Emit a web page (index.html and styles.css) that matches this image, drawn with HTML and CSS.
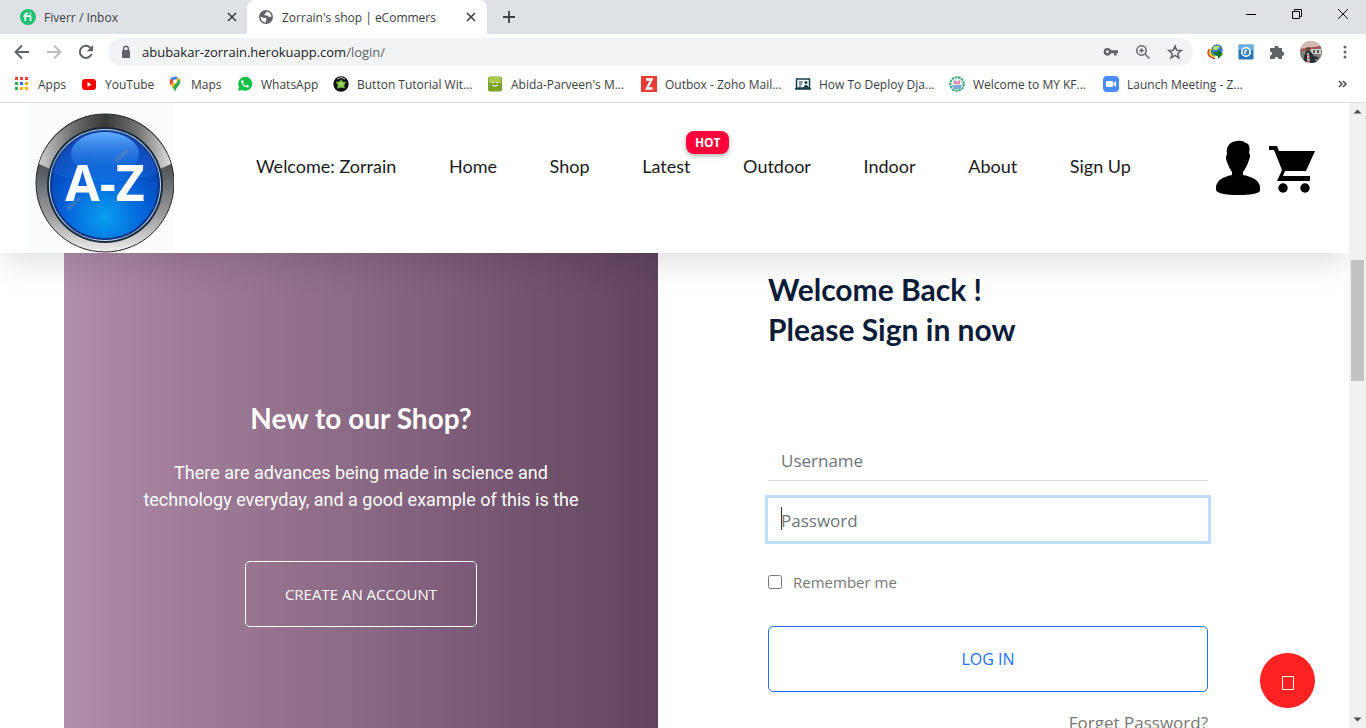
FILE: index.html
```html
<!DOCTYPE html>
<html lang="en">
<head>
<meta charset="utf-8">
<title>Zorrain's shop | eCommers</title>
<link rel="stylesheet" href="styles.css">
</head>
<body>
<div class="window">
  <div class="tabstrip">
    <div class="tab">
      <svg class="icon" viewBox="0 0 16 16"><circle cx="8" cy="8" r="8" fill="#1dbf73"/><path d="M3.500 7.200H11M5.300 12V6.200Q5.300 4.200 8 4.500M10.500 7v5" fill="none" stroke="#fff" stroke-width="1.700"/><circle cx="10.500" cy="4.600" r="1" fill="#fff"/></svg>
      <span class="tab-title">Fiverr / Inbox</span>
      <button class="bare" aria-label="Close tab"><svg class="icon-sm" viewBox="0 0 10 10"><path d="M1 1l8 8M9 1l-8 8" stroke="#3c4043" stroke-width="1.600"/></svg></button>
    </div>
    <div class="tab tab-active">
      <svg class="icon" viewBox="0 0 16 16"><circle cx="8" cy="8" r="7" fill="#5f6368"/><path d="M2.400 7.500Q4.500 9.300 8 8.800Q9 10 8 11.200L8 13.600Q3 13.300 2.400 7.500ZM8.500 2.500Q12.500 3 13.600 7.500L11 8Q9.500 5.800 7.300 6.500L6 5.200Q8.500 4.800 8.500 2.500Z" fill="#fff"/></svg>
      <span class="tab-title">Zorrain's shop | eCommers</span>
      <button class="bare" aria-label="Close tab"><svg class="icon-sm" viewBox="0 0 10 10"><path d="M1 1l8 8M9 1l-8 8" stroke="#3c4043" stroke-width="1.600"/></svg></button>
    </div>
    <button class="bare new-tab" aria-label="New tab"><svg class="icon" viewBox="0 0 16 16"><path d="M8 2v12M2 8h12" stroke="#3c4043" stroke-width="1.800"/></svg></button>
    <div class="window-controls">
      <button class="bare" aria-label="Minimize"><svg class="icon" viewBox="0 0 16 16"><path d="M3 8.500h10" stroke="#000"/></svg></button>
      <button class="bare" aria-label="Restore"><svg class="icon" viewBox="0 0 16 16"><path d="M3.500 5.500h7v7h-7zM5.500 5.500v-2h7v7h-2" fill="none" stroke="#000"/></svg></button>
      <button class="bare" aria-label="Close"><svg class="icon" viewBox="0 0 16 16"><path d="M3 3l10 10M13 3L3 13" stroke="#000"/></svg></button>
    </div>
  </div>

  <div class="toolbar">
    <button class="bare" aria-label="Back"><svg class="icon" viewBox="0 0 16 16"><path d="M15 8H2M8 1.500L1.500 8L8 14.500" fill="none" stroke="#5f6368" stroke-width="1.900"/></svg></button>
    <button class="bare" aria-label="Forward"><svg class="icon" viewBox="0 0 16 16"><path d="M1 8h13M8 1.500L14.500 8L8 14.500" fill="none" stroke="#babcbe" stroke-width="1.900"/></svg></button>
    <button class="bare" aria-label="Reload"><svg class="icon" viewBox="0 0 16 16"><path d="M13.500 10A6 6 0 1 1 12.300 3.800" fill="none" stroke="#5f6368" stroke-width="2"/><path d="M15 1v6.200H8.800z" fill="#5f6368"/></svg></button>
    <div class="address">
      <svg class="icon" viewBox="0 0 16 16"><rect x="4" y="6" width="8" height="8" rx="1" fill="#5f6368"/><path d="M5.700 7V4.500a2.300 2.300 0 0 1 4.600 0V7" fill="none" stroke="#5f6368" stroke-width="1.400"/></svg>
      <span class="url">abubakar-zorrain.herokuapp.com<span class="url-path">/login/</span></span>
      <svg class="icon" viewBox="0 0 16 16"><path fill-rule="evenodd" d="M4.500 4A3.800 3.800 0 1 0 8 9.200h3V11.500h2.500V9.200H15V6.200H8A3.800 3.800 0 0 0 4.500 4ZM4.500 6.300a1.400 1.400 0 1 1 0 2.900a1.400 1.400 0 0 1 0-2.900Z" fill="#5f6368"/></svg>
      <svg class="icon" viewBox="0 0 16 16"><circle cx="6.500" cy="6.500" r="4.700" fill="none" stroke="#5f6368" stroke-width="1.500"/><path d="M10 10l4.500 4.500M4.300 6.500h4.400M6.500 4.300v4.400" stroke="#5f6368" stroke-width="1.400"/></svg>
      <svg class="icon" viewBox="0 0 16 16"><path d="M8 2l1.700 4.200 4.500.3-3.400 2.900 1.100 4.400L8 11.400l-3.900 2.400 1.100-4.400L1.800 6.500l4.500-.3z" fill="none" stroke="#5f6368" stroke-width="1.500"/></svg>
    </div>
    <div class="extensions">
      <svg class="icon" viewBox="0 0 16 16"><path d="M2.500 5Q-2 12 8 14.500" fill="none" stroke="#d42f24" stroke-width="1.500"/><path d="M4 5Q0 11 8 12.800" fill="none" stroke="#edc62f" stroke-width="2"/><path d="M5 6Q3 10 8 11.500" fill="none" stroke="#4a9e35" stroke-width="1.500"/><circle cx="10" cy="6" r="5.700" fill="#3c79bd"/><path d="M6 3q4-3 7 0l-3 3-4 0z" fill="#b6d86b"/><path d="M7 8h4V6l5 4-5 5v-3Q8 12 7 8z" fill="#16751d"/></svg>
      <svg class="icon" viewBox="0 0 16 16"><rect x=".5" y=".5" width="15" height="15" rx="1" fill="#2a75b8"/><path d="M1 1h14v5H1z" fill="#62aee5"/><circle cx="8" cy="8" r="4.300" fill="#3e85bf" stroke="#fff" stroke-width="1.600"/><path d="M7 10Q6 7 9 6" fill="none" stroke="#fff" stroke-width="1.400"/></svg>
      <svg class="icon" viewBox="0 0 16 16"><path d="M1 4h4.300a2.200 2.200 0 1 1 4.400 0H13v3.500a2.200 2.200 0 1 1 0 4.400V15H9.500a2 2 0 0 0-4 0H1v-3.500a2 2 0 0 0 0-4z" fill="#5f6368"/></svg>
      <svg class="avatar" viewBox="0 0 22 22"><clipPath id="face"><circle cx="11" cy="11" r="11"/></clipPath><g clip-path="url(#face)"><path d="M0 0h22v22H0z" fill="#887f79"/><path d="M0 0h22v5L0 8z" fill="#d4bab5"/><path d="M1 8l20-3v2L1 10z" fill="#a54d49"/><path d="M11 8h10v5H11z" fill="#cdd0c7"/><path d="M13 9h2v3h-2zM17 9h2v3h-2z" fill="#54605e"/><path d="M3 22l1-7 3-6 4 2 3 4 4 1 1 6z" fill="#292f36"/><circle cx="8" cy="8" r="2" fill="#6b4038"/><path d="M7 12h2l1 10H7z" fill="#d7c9c8"/><path d="M7 14h3M7 17h3M7 20h3" stroke="#a83b44"/><path d="M1 12h3v5H1zM15 18h5v2h-5z" fill="#718574"/></g></svg>
      <button class="bare" aria-label="Menu"><svg class="icon" viewBox="0 0 16 16"><g fill="#5f6368"><circle cx="8" cy="3" r="1.500"/><circle cx="8" cy="8" r="1.500"/><circle cx="8" cy="13" r="1.500"/></g></svg></button>
    </div>
  </div>

  <nav class="bookmarks" aria-label="Bookmarks">
    <a href="#"><svg class="icon" viewBox="0 0 16 16"><path d="M1 1h3v3H1zM6 1h3v3H6zM11 1h3v3h-3z" fill="#ea4335"/><path d="M1 6h3v3H1zM1 11h3v3H1z" fill="#34a853"/><path d="M6 6h3v3H6z" fill="#1a73e8"/><path d="M11 6h3v3h-3zM6 11h3v3H6zM11 11h3v3h-3z" fill="#fbaf05"/></svg>Apps</a>
    <a href="#"><svg class="icon" viewBox="0 0 16 16"><rect x="1" y="3" width="14" height="11" rx="3" fill="#f00"/><path d="M6.500 6l4 2.500-4 2.500z" fill="#fff"/></svg>YouTube</a>
    <a href="#"><svg class="icon" viewBox="0 0 16 16"><path d="M8 .5A5.300 5.300 0 0 0 3.800 2.500L7 6 11 1.500Q9.500.5 8 .5z" fill="#4285f4"/><path d="M3.800 2.500L7 5.500 3.800 9.200Q1.500 5.500 3.800 2.500z" fill="#ea4335"/><path d="M3.800 9.200L11 1.500Q12.500 2.500 13 4L6 12z" fill="#fbbc04"/><path d="M12.500 2.800Q14.500 6.500 11 10.500Q8.500 13 8 16Q7.500 13 5.500 11.500z" fill="#34a853"/><circle cx="8" cy="5.500" r="2" fill="#fff"/></svg>Maps</a>
    <a href="#"><svg class="icon" viewBox="0 0 16 16"><path d="M1 15l1-4A7 7 0 1 1 5 14z" fill="#12c143"/><path d="M5 4q-1.500 1-.5 3 2 4 5.500 4.500 2 0 2-1.500L9.800 8.800 8.800 10Q7 9 6 7.200l.8-1L6 4z" fill="#fff"/></svg>WhatsApp</a>
    <a href="#"><svg class="icon" viewBox="0 0 16 16"><circle cx="8" cy="8" r="7.700" fill="#111"/><path d="M8 3.500l1.800 2.300 3.500.2-2 2.800.4 3.700L8 11.500l-3.700 1 .4-3.700-2-2.800 3.500-.2z" fill="#7bc142"/><path d="M4 3q4-3 8 0" stroke="#bbb" fill="none"/><circle cx="8" cy="8" r="2" fill="#a6d96c"/></svg>Button Tutorial Wit...</a>
    <a href="#"><svg class="icon" viewBox="0 0 16 16"><rect x="1" y=".5" width="14" height="15" rx="2" fill="#7da127"/><path d="M2 1h12v6H2z" fill="#a9c94e"/><path d="M5 6.500h1.500M9.500 6.500H11M5 9q3 2.500 6 0" stroke="#fff" fill="none"/></svg>Abida-Parveen's M...</a>
    <a href="#"><svg class="icon" viewBox="0 0 16 16"><path d="M0 0h16v16H0z" fill="#ec3a35"/><path d="M5 3.500h5.500L6 12.500h5.500" fill="none" stroke="#fff" stroke-width="2.400"/></svg>Outbox - Zoho Mail...</a>
    <a href="#"><svg class="icon" viewBox="0 0 16 16"><path d="M1.500 3h13v9h-13zM0 13h16" fill="#fff" stroke="#153f4b" stroke-width="1.500"/><path d="M4 6h4M4 8h3M4 10h2" stroke="#153f4b"/><circle cx="11" cy="6.500" r="1.500" fill="#153f4b"/><path d="M8 12l2-3h2l2 3z" fill="#153f4b"/></svg>How To Deploy Dja...</a>
    <a href="#"><svg class="icon" viewBox="0 0 16 16"><circle cx="8" cy="8" r="6.800" fill="#e5edf0" stroke="#3aa878" stroke-width="2" stroke-dasharray="2.500 .8"/><path d="M3 9h10l-2 4H5z" fill="#7ba9d3"/><path d="M5 4l3 2 3-2v4H5z" fill="#dd8a9d"/></svg>Welcome to MY KF...</a>
    <a href="#"><svg class="icon" viewBox="0 0 16 16"><rect width="16" height="16" rx="4" fill="#4a8cff"/><rect x="3" y="5" width="7" height="6" rx="1" fill="#fff"/><path d="M10.500 7l2.500-2v6l-2.500-2z" fill="#fff"/></svg>Launch Meeting - Z...</a>
    <button class="bare more" aria-label="More bookmarks"><svg class="icon" viewBox="0 0 16 16"><path d="M4 5l3 3-3 3M8 5l3 3-3 3" fill="none" stroke="#4d5156" stroke-width="1.600"/></svg></button>
  </nav>

  <div class="viewport">
    <div class="page">
      <header class="site-header">
        <a class="logo" href="#" aria-label="A-Z">
          <svg viewBox="0 0 146 150">
            <defs>
              <linearGradient id="rimTop" x1="0" x2="1" y1="0" y2="0"><stop offset="0" stop-color="#cfcfcf"/><stop offset=".25" stop-color="#707070"/><stop offset=".5" stop-color="#383838"/><stop offset=".75" stop-color="#737373"/><stop offset="1" stop-color="#dedede"/></linearGradient>
              <linearGradient id="rimLow" x1="0" x2="0" y1="0" y2="1"><stop offset=".35" stop-color="#4b4d50"/><stop offset=".75" stop-color="#a0a0a0"/><stop offset="1" stop-color="#eee"/></linearGradient>
              <radialGradient id="glass" cx=".5" cy=".8" r=".75"><stop offset="0" stop-color="#08a0ef"/><stop offset=".45" stop-color="#0567dc"/><stop offset="1" stop-color="#053aac"/></radialGradient>
              <linearGradient id="shine" x1="0" x2="0" y1="0" y2="1"><stop offset="0" stop-color="#63adff"/><stop offset="1" stop-color="#0869e2" stop-opacity=".2"/></linearGradient>
            </defs>
            <path d="M0 0h146v150H0z" fill="#fbfcfe"/>
            <circle cx="77" cy="80" r="69" fill="url(#rimLow)" stroke="#252525"/>
            <path d="M11 61A69 69 0 0 1 143 61L132 66A58 58 0 0 0 22 66z" fill="url(#rimTop)"/>
            <circle cx="77" cy="82" r="58" fill="#172b3f"/>
            <circle cx="77" cy="82" r="56" fill="#c9d8ef"/>
            <circle cx="77" cy="82" r="54" fill="url(#glass)" stroke="#0c3687" stroke-width="2"/>
            <path d="M24 70A54 54 0 0 1 130 70Q77 88 24 70z" fill="#4d9aff" opacity=".15"/>
            <ellipse cx="77" cy="51" rx="34" ry="22" fill="url(#shine)"/>
            <path d="M86 57l12-12 3 3-12 12zM38 105l12-12 3 3-12 12z" fill="#6d86ad" opacity=".4"/>
            <text class="logo-text" x="77" y="98" text-anchor="middle">A-Z</text>
          </svg>
        </a>
        <nav class="menu" aria-label="Main">
          <a href="#">Welcome: Zorrain</a>
          <a href="#">Home</a>
          <a href="#">Shop</a>
          <a href="#" class="with-badge">Latest<span class="badge">HOT</span></a>
          <a href="#">Outdoor</a>
          <a href="#">Indoor</a>
          <a href="#">About</a>
          <a href="#">Sign Up</a>
        </nav>
        <div class="header-icons">
          <a href="#" aria-label="Account"><svg class="user" viewBox="0 0 46 56"><path d="M22 1C27 0 29 2 31 3C35 4 35 9 34 13Q36 15 34 20Q33 24 30 29L28 32V35Q44 38 45 47V51Q42 55 23 55Q3 55 1 50V47Q2 38 17 35V32Q14 28 12 22Q10 17 12 14C11 8 13 2 22 1z"/></svg></a>
          <a href="#" aria-label="Cart"><svg class="cart" viewBox="0 0 46 48"><path d="M0 0h8l2 5h36l-9 20H16l-2 5h27v5H8l5-11L5 4H0z"/><circle cx="14" cy="42" r="4.700"/><circle cx="36" cy="42" r="4.700"/></svg></a>
        </div>
      </header>

      <main class="login">
        <section class="promo">
          <h2>New to our Shop?</h2>
          <p>There are advances being made in science and technology everyday, and a good example of this is the</p>
          <a class="create" href="#">CREATE AN ACCOUNT</a>
        </section>
        <section class="signin">
          <h3>Welcome Back !<br>Please Sign in now</h3>
          <form>
            <input class="field" type="text" placeholder="Username" aria-label="Username">
            <div class="password">
              <input class="field field-focus" type="password" placeholder="Password" aria-label="Password">
            </div>
            <div class="remember"><input type="checkbox" id="remember"><label for="remember">Remember me</label></div>
            <button class="submit" type="submit">LOG IN</button>
            <a class="forgot" href="#">Forget Password?</a>
          </form>
        </section>
      </main>
      <button class="to-top" aria-label="Back to top"><span class="missing-glyph"></span></button>
    </div>
    <div class="scrollbar">
      <svg class="arrow" viewBox="0 0 17 17"><path d="M4.500 10.500h8l-4-4z" fill="#505050"/></svg>
      <div class="track"><div class="thumb"></div></div>
      <svg class="arrow" viewBox="0 0 17 17"><path d="M4.500 6.500h8l-4 4z" fill="#505050"/></svg>
    </div>
  </div>
</div>
</body>
</html>
```
FILE: styles.css
```css
* { box-sizing: border-box; }
body { margin: 0; background: #fff; font-family: "Open Sans", sans-serif; }
a { color: inherit; text-decoration: none; }
.window { display: flex; flex-direction: column; height: 100vh; overflow: hidden; }
.bare { display: flex; align-items: center; justify-content: center; padding: 0; border: 0; background: none; }
.icon { display: block; flex: none; width: 16px; height: 16px; }
.icon-sm { display: block; width: 10px; height: 10px; }

.tabstrip { display: flex; height: 34px; background: #dee1e6; font-size: 12px; color: #3c4043; }
.tab { display: flex; align-items: center; gap: 8px; width: 240px; padding: 0 11px; }
.tab:first-child { width: 247px; padding-left: 20px; padding-right: 10px; }
.tab-active { border-radius: 8px 8px 0 0; background: #fff; }
.tab-title { flex: 1; white-space: nowrap; }
.new-tab { margin-left: 14px; }
.window-controls { display: flex; gap: 30px; margin-left: auto; padding: 0 15px 6px 0; }

.toolbar { display: flex; align-items: center; gap: 16px; height: 36px; padding: 0 14px; background: #fff; }
.address { display: flex; flex: 1; align-items: center; gap: 16px; height: 28px; margin-left: -2px; padding: 0 10px; border-radius: 14px; background: #f1f3f4; }
.url { flex: 1; margin-left: -8px; font-size: 13px; color: #202124; }
.url-path { color: #5f6368; }
.extensions { display: flex; align-items: center; gap: 15px; margin-left: -2px; }
.extensions .bare { margin-right: -1px; }
.avatar { display: block; width: 22px; height: 22px; }

.bookmarks { display: grid; grid-template-columns: 67px 86px 70px 96px repeat(6, 154px) 1fr; align-items: center; height: 33px; padding: 0 15px 4px 14px; border-bottom: 1px solid #dadce0; font-size: 12px; color: #3c4043; }
.bookmarks a { display: flex; align-items: center; gap: 8px; white-space: nowrap; }
.more { justify-self: end; }

.viewport { display: flex; flex: 1; min-height: 0; }
.page { position: relative; flex: 1; overflow: hidden; }
.site-header { position: relative; z-index: 1; display: flex; align-items: flex-start; height: 150px; padding: 0 34px 0 28px; background: #fff; box-shadow: 0 10px 30px rgba(0, 0, 0, 0.12); }
.logo { flex: none; width: 146px; }
.logo svg { display: block; width: 100%; }
.logo-text { font: bold 50px "Open Sans", sans-serif; fill: #fff; }
.menu { display: flex; flex: 1; justify-content: space-between; margin: 0 84px 0 82px; padding-top: 51px; font: 18px/24px Lato, sans-serif; color: #1b1b1b; }
.with-badge { position: relative; }
.badge { position: absolute; top: -23px; left: 44px; width: 43px; border-radius: 8px; background: #ff003c; box-shadow: 0 2px 5px rgba(0, 0, 0, 0.3); color: #fff; font: bold 12px/23px "Open Sans", sans-serif; text-align: center; }
.header-icons { display: flex; gap: 8px; padding-top: 37px; }
.user { display: block; width: 46px; height: 56px; }
.cart { display: block; width: 46px; height: 48px; margin-top: 6px; }

.login { display: grid; grid-template-columns: 594fr 627fr; min-height: 100%; padding: 0 64px; }
.promo { display: flex; flex-direction: column; align-items: center; padding: 147px 72px 0; background: linear-gradient(90deg, #b08ead 0%, #a07c98 20%, #8a6985 50%, #755571 75%, #60455d 100%); color: #fff; text-align: center; }
.promo h2 { margin: 0; font: bold 28px/36px Lato, sans-serif; }
.promo p { margin: 23px 0 48px; font: 18px/27px Roboto, sans-serif; }
.create { padding: 0 39px; border: 1px solid #fff; border-radius: 5px; font-size: 15px; line-height: 64px; }
.signin { padding: 16px 77px 0 110px; }
.signin h3 { margin: 0; font: bold 30px/40px Lato, sans-serif; color: #0b1c39; }
.signin form { display: flex; flex-direction: column; margin-top: 89px; }
.field { display: block; width: 100%; height: 43px; padding: 3px 13px 0; border: 0; border-bottom: 1px solid #d9d9d9; outline: 0; background: #fff; font: 17px "Open Sans", sans-serif; }
.field::placeholder { color: #6c757d; opacity: 1; }
.password { position: relative; margin-top: 17px; }
.field-focus { border-color: transparent; box-shadow: 0 0 0 3px #bfdeff; }
.password::after { content: ""; position: absolute; top: 9px; left: 13px; width: 1px; height: 23px; background: #333; }
.remember { display: flex; align-items: center; gap: 11px; margin-top: 28px; color: #777; font-size: 15px; line-height: 26px; }
.remember input { width: 14px; height: 14px; margin: 0; }
.submit { height: 66px; margin-top: 31px; border: 1px solid #1f71f5; border-radius: 5px; background: #fff; color: #1f71f5; font: 16px "Open Sans", sans-serif; }
.forgot { align-self: flex-end; margin-top: 18px; color: #777; font-size: 17px; line-height: 26px; }
.to-top { position: absolute; right: 34px; bottom: 20px; z-index: 2; display: flex; align-items: center; justify-content: center; width: 55px; height: 55px; padding: 4px 0 0; border: 0; border-radius: 50%; background: #ff2222; }
.missing-glyph { width: 12px; height: 14px; border: 1px solid #fff; }

.scrollbar { display: flex; flex-direction: column; width: 17px; background: #f1f1f1; }
.arrow { display: block; height: 17px; }
.track { flex: 1; padding: 140px 2px 0; }
.thumb { height: 121px; background: #c1c1c1; }
```
